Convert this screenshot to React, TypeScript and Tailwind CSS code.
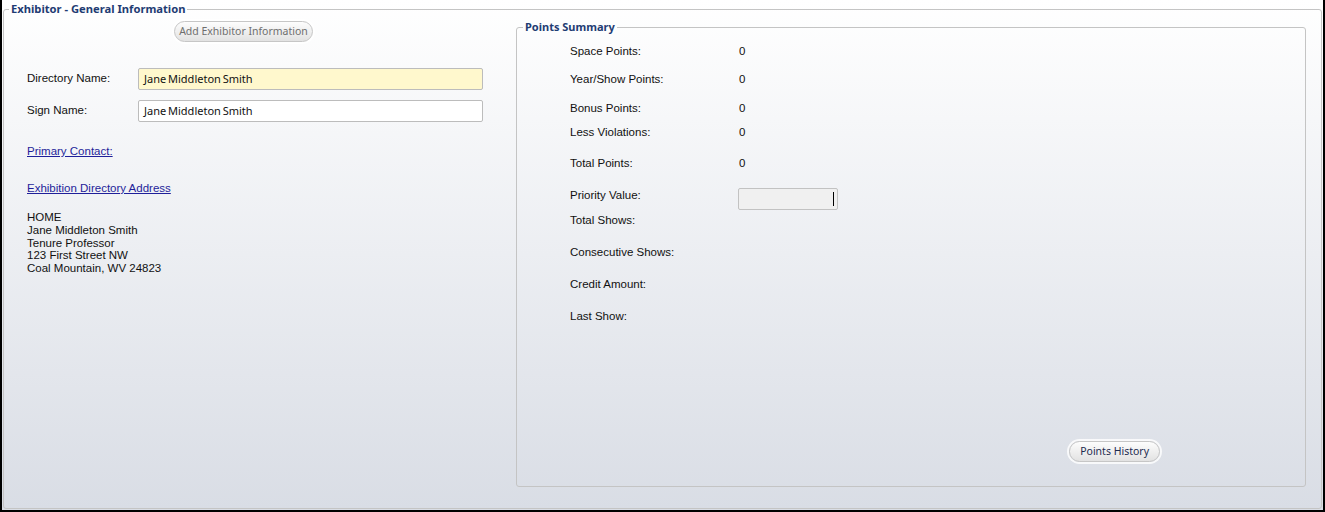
import React from 'react'

const summaryRows = [
  { label: 'Space Points:', value: '0', cls: 'mt-[9px]' },
  { label: 'Year/Show Points:', value: '0', cls: 'mt-[12px]' },
  { label: 'Bonus Points:', value: '0', cls: 'mt-[13px]' },
  { label: 'Less Violations:', value: '0', cls: 'mt-[8px]' },
  { label: 'Total Points:', value: '0', cls: 'mt-[15px]' },
]

const lowerRows = [
  { label: 'Total Shows:', cls: 'mt-[2px]' },
  { label: 'Consecutive Shows:', cls: 'mt-[16px]' },
  { label: 'Credit Amount:', cls: 'mt-[16px]' },
  { label: 'Last Show:', cls: 'mt-[16px]' },
]

function PillButton({ children, disabled, className }: { children: React.ReactNode; disabled?: boolean; className?: string }) {
  return (
    <button
      type="button"
      className={
        'h-[21px] rounded-full border border-[#c6c6c6] bg-linear-to-b from-[#fdfdfd] to-[#e2e2e2] text-[10.5px] leading-[19px] shadow-[0_0_0_2px_rgba(255,255,255,0.8)] ' +
        (disabled ? 'text-[#6e6e6e] ' : 'text-[#1d2b4f] ') +
        (className ?? '')
      }
      style={{ fontFamily: '"Noto Sans", "Open Sans", sans-serif' }}
    >
      {children}
    </button>
  )
}

export default function App() {
  return (
    <div
      className="h-[512px] w-[1325px] border-x-2 border-b-2 border-black bg-linear-to-b from-[#ffffff] to-[#d9dde5] pl-px pr-px text-[#111]"
      style={{ fontFamily: '"Liberation Sans", Arial, sans-serif' }}
    >
      <fieldset className="flex h-[509px] w-[1319px] rounded-[3px] border border-[#c4c4c4] pt-0">
        <legend
          className="ml-[5px] px-[2px] text-[11.2px] font-bold leading-[18px] text-[#1f3c73]"
          style={{ fontFamily: '"Noto Sans", "Open Sans", sans-serif' }}
        >
          Exhibitor - General Information
        </legend>

        {/* left column */}
        <div className="flex w-[512px] flex-col">
          <div className="mt-[3px] flex w-[479px] justify-center">
            <PillButton disabled className="px-[4px]">Add Exhibitor Information</PillButton>
          </div>

          <div className="mt-[26px] flex items-center pl-[23px]">
            <label className="w-[111px] text-[11.5px]">Directory Name:</label>
            <div
              className="h-[22px] w-[345px] rounded-[2px] border border-[#bcbcbc] bg-[#fff8cd] px-[5px] text-[11px] leading-[20px]"
              style={{ fontFamily: '"Noto Sans", "Open Sans", sans-serif', wordSpacing: '-1px' }}
            >
              Jane Middleton Smith
            </div>
          </div>
          <div className="mt-[10px] flex items-center pl-[23px]">
            <label className="w-[111px] text-[11.5px]">Sign Name:</label>
            <div
              className="h-[22px] w-[345px] rounded-[2px] border border-[#bcbcbc] bg-white px-[5px] text-[11px] leading-[20px]"
              style={{ fontFamily: '"Noto Sans", "Open Sans", sans-serif', wordSpacing: '-1px' }}
            >
              Jane Middleton Smith
            </div>
          </div>

          <a href="#" className="mt-[22px] ml-[23px] self-start text-[11.5px] leading-[14px] text-[#1f1f9a] underline">
            Primary Contact:
          </a>
          <a href="#" className="mt-[23px] ml-[23px] self-start text-[11.5px] leading-[14px] text-[#1f1f9a] underline">
            Exhibition Directory Address
          </a>

          <div className="mt-[16px] pl-[23px] text-[11.5px] leading-[12.75px]">
            <div>HOME</div>
            <div>Jane Middleton Smith</div>
            <div>Tenure Professor</div>
            <div>123 First Street NW</div>
            <div>Coal Mountain, WV 24823</div>
          </div>
        </div>

        {/* points summary */}
        <fieldset className="mt-[1px] mb-[21px] mr-[15px] flex flex-1 flex-col rounded-[3px] border border-[#c4c4c4] pl-[53px]">
          <legend
            className="-ml-[47px] px-[2px] text-[11px] font-bold leading-[16px] text-[#1f3c73]"
            style={{ fontFamily: '"Noto Sans", "Open Sans", sans-serif' }}
          >
            Points Summary
          </legend>

          {summaryRows.map((r) => (
            <div key={r.label} className={'flex h-[16px] items-center text-[11.5px] ' + r.cls}>
              <span className="w-[169px]">{r.label}</span>
              <span>{r.value}</span>
            </div>
          ))}

          <div className="mt-[15px] flex text-[11.5px]">
            <span className="h-[16px] w-[168px] leading-[16px]">Priority Value:</span>
            <div className="relative mt-[1px] h-[22px] w-[100px] rounded-[2px] border border-[#c2c2c2] bg-[#f0f0f0]">
              <span className="absolute right-[3px] top-[3px] h-[14px] w-px bg-black" />
            </div>
          </div>

          {lowerRows.map((r) => (
            <div key={r.label} className={'h-[16px] text-[11.5px] leading-[16px] ' + r.cls}>
              {r.label}
            </div>
          ))}

          <div className="mt-auto mb-[24px] flex justify-end pr-[145px]">
            <PillButton className="px-[10px]">Points History</PillButton>
          </div>
        </fieldset>
      </fieldset>
    </div>
  )
}
